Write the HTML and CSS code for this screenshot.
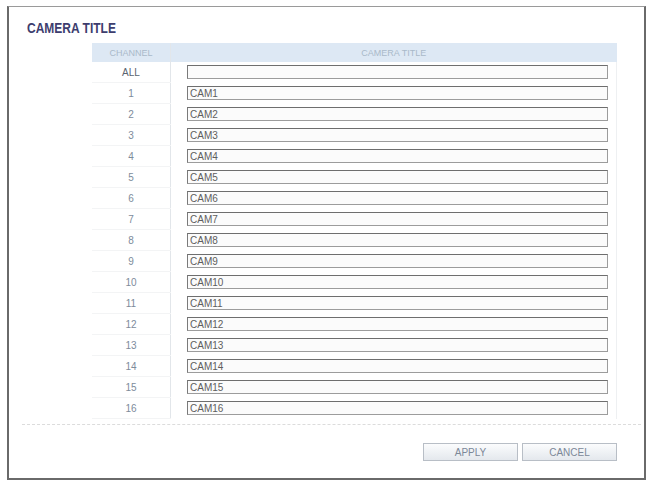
FILE: index.html
```html
<!DOCTYPE html>
<html lang="en">
<head>
  <meta charset="UTF-8" />
  <title>Camera Title</title>
  <link rel="stylesheet" href="styles.css">
</head>
<body>

<div class="panel">
  <h1 class="panel-title">CAMERA TITLE</h1>

  <table class="cam-table">
    <thead>
      <tr>
        <th class="col-ch">CHANNEL</th>
        <th class="col-title">CAMERA TITLE</th>
      </tr>
    </thead>
    <tbody>
      <tr><td class="col-ch all">ALL</td><td class="col-title"><input class="cam-input" type="text" value=""></td></tr>
      <tr><td class="col-ch">1</td><td class="col-title"><input class="cam-input" type="text" value="CAM1"></td></tr>
      <tr><td class="col-ch">2</td><td class="col-title"><input class="cam-input" type="text" value="CAM2"></td></tr>
      <tr><td class="col-ch">3</td><td class="col-title"><input class="cam-input" type="text" value="CAM3"></td></tr>
      <tr><td class="col-ch">4</td><td class="col-title"><input class="cam-input" type="text" value="CAM4"></td></tr>
      <tr><td class="col-ch">5</td><td class="col-title"><input class="cam-input" type="text" value="CAM5"></td></tr>
      <tr><td class="col-ch">6</td><td class="col-title"><input class="cam-input" type="text" value="CAM6"></td></tr>
      <tr><td class="col-ch">7</td><td class="col-title"><input class="cam-input" type="text" value="CAM7"></td></tr>
      <tr><td class="col-ch">8</td><td class="col-title"><input class="cam-input" type="text" value="CAM8"></td></tr>
      <tr><td class="col-ch">9</td><td class="col-title"><input class="cam-input" type="text" value="CAM9"></td></tr>
      <tr><td class="col-ch">10</td><td class="col-title"><input class="cam-input" type="text" value="CAM10"></td></tr>
      <tr><td class="col-ch">11</td><td class="col-title"><input class="cam-input" type="text" value="CAM11"></td></tr>
      <tr><td class="col-ch">12</td><td class="col-title"><input class="cam-input" type="text" value="CAM12"></td></tr>
      <tr><td class="col-ch">13</td><td class="col-title"><input class="cam-input" type="text" value="CAM13"></td></tr>
      <tr><td class="col-ch">14</td><td class="col-title"><input class="cam-input" type="text" value="CAM14"></td></tr>
      <tr><td class="col-ch">15</td><td class="col-title"><input class="cam-input" type="text" value="CAM15"></td></tr>
      <tr><td class="col-ch">16</td><td class="col-title"><input class="cam-input" type="text" value="CAM16"></td></tr>
    </tbody>
  </table>

  <div class="actions">
    <button class="btn">APPLY</button>
    <button class="btn">CANCEL</button>
  </div>
</div>

</body>
</html>
```

FILE: styles.css
```css
:root {
  --frame: #6a6a6a;
  --head-bg: #dde8f4;
  --head-text: #a9b9c9;
  --ch-text: #7d8b9b;
  --title-text: #3d3d6e;
}

body {
  margin: 0;
  background: #fff;
  font-family: "Liberation Sans", Arial, sans-serif;
}

.panel {
  box-sizing: border-box;
  height: 474px;
  margin: 6px 2px 0 7px;
  padding: 13px 0 0 0;
  border: 1px solid #9a9a9a;
  border-left: 2px solid var(--frame);
  border-right: 2px solid var(--frame);
  border-bottom: 2px solid var(--frame);
  background: #fff;
}

.panel-title {
  margin: 0 0 0 18px;
  font-size: 12px;
  line-height: 14px;
  font-weight: bold;
  color: var(--title-text);
  transform: scaleY(1.15);
  transform-origin: left top;
}

.cam-table {
  margin: 9px 0 0 83px;
  width: 525px;
  border-collapse: collapse;
}

.cam-table th {
  height: 19px;
  padding: 0;
  background: var(--head-bg);
  color: var(--head-text);
  font-size: 9px;
  font-weight: normal;
  text-align: center;
}

/* 20px + 1px row rule = 21px pitch */
.cam-table td {
  height: 20px;
  padding: 0;
}

.col-ch {
  width: 78px;
  border-right: 1px solid #e2e6ea;
}

.cam-table td.col-ch {
  text-align: center;
  font-size: 10px;
  color: var(--ch-text);
  border-bottom: 1px solid #f3f4f5;
}

.cam-table td.all {
  color: #5a6470;
}

.cam-table td.col-title {
  padding: 0 8px 0 16px;
  border-right: 1px solid #eef0f2;
}

.cam-input {
  display: block;
  box-sizing: border-box;
  width: 100%;
  height: 14px;
  margin: 0;
  padding: 0 2px;
  border: 1px solid #9c9c9c;
  border-top-color: #6e6e6e;
  border-left-color: #7a7a7a;
  background: #fbfbfb;
  font-family: "Liberation Sans", Arial, sans-serif;
  font-size: 10px;
  line-height: 12px;
  color: #5e5e5e;
}

.actions {
  display: flex;
  justify-content: flex-end;
  gap: 4px;
  margin: 5px 3px 0 13px;
  padding: 18px 24px 0 0;
  border-top: 1px dashed #dcdcdc;
}

.btn {
  width: 95px;
  height: 18px;
  padding: 0;
  border: 1px solid #b8bec6;
  background: linear-gradient(to bottom, #fbfcfd, #e4e8ed);
  color: #7c8898;
  font-family: "Liberation Sans", Arial, sans-serif;
  font-size: 10px;
}
```
